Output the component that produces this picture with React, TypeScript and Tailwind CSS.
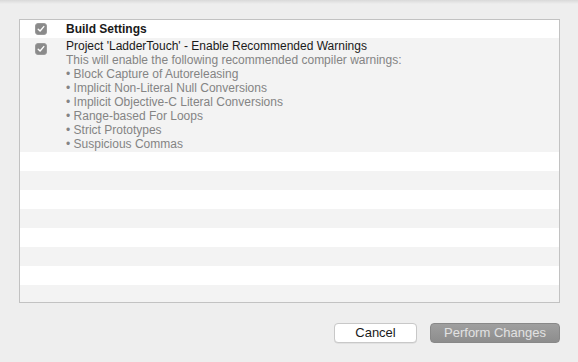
import React from "react";

function Check() {
  return (
    <div className="w-[12px] h-[12px] rounded-[3px] bg-[#8a8a8a] border border-[#9a9a9a] flex items-center justify-center">
      <svg width="8" height="8" viewBox="0 0 8 8" fill="none">
        <path d="M1.2 4.2 L3.1 6 L6.8 1.6" stroke="#ffffff" strokeWidth="1.4" strokeLinecap="round" strokeLinejoin="round" />
      </svg>
    </div>
  );
}

const bullets = [
  "Block Capture of Autoreleasing",
  "Implicit Non-Literal Null Conversions",
  "Implicit Objective-C Literal Conversions",
  "Range-based For Loops",
  "Strict Prototypes",
  "Suspicious Commas",
];

export default function App() {
  const stripes = [0, 1, 2, 3, 4, 5, 6, 7];
  return (
    <div
      className="w-[578px] h-[362px] bg-[#eeeeee] flex flex-col relative overflow-hidden"
      style={{ fontFamily: '"Liberation Sans", Arial, sans-serif' }}
    >
      <div className="absolute top-0 left-0 right-0 h-[4px] bg-gradient-to-b from-[#d9d9d9] to-[#eeeeee]" />
      <div className="mt-[19px] ml-[19px] w-[541px] h-[284px] border border-[#c2c2c2] bg-white flex flex-col overflow-hidden">
        <div className="h-[18px] bg-white flex items-center shrink-0">
          <div className="w-[46px] pl-[15px] flex items-center">
            <Check />
          </div>
          <div className="text-[12px] font-bold text-[#1a1a1a] leading-[14px]">Build Settings</div>
        </div>
        <div className="h-[114px] bg-[#f3f3f3] flex shrink-0">
          <div className="w-[46px] pl-[15px] pt-[5px]">
            <Check />
          </div>
          <div className="pt-[1px] text-[12px] leading-[14px]">
            <div className="text-[#1a1a1a]">Project 'LadderTouch' - Enable Recommended Warnings</div>
            <div className="text-[#848484]">This will enable the following recommended compiler warnings:</div>
            {bullets.map((b) => (
              <div key={b} className="text-[#848484]">• {b}</div>
            ))}
          </div>
        </div>
        {stripes.map((i) => (
          <div key={i} className={`h-[19px] shrink-0 ${i % 2 === 0 ? "bg-white" : "bg-[#f3f3f3]"}`} />
        ))}
      </div>
      <div className="flex justify-end gap-[13px] mt-[20px] mr-[18px]">
        <button className="w-[83px] h-[20px] rounded-[4px] bg-white border border-[#c8c8c8] shadow-[0_0.5px_0.5px_rgba(0,0,0,0.1)] text-[13px] text-[#1a1a1a] leading-[18px]">
          Cancel
        </button>
        <button className="w-[130px] h-[20px] rounded-[4px] bg-gradient-to-b from-[#9f9f9f] to-[#8d8d8d] border border-[#888888] text-[13px] text-[#e2e2e2] leading-[18px]">
          Perform Changes
        </button>
      </div>
    </div>
  );
}
